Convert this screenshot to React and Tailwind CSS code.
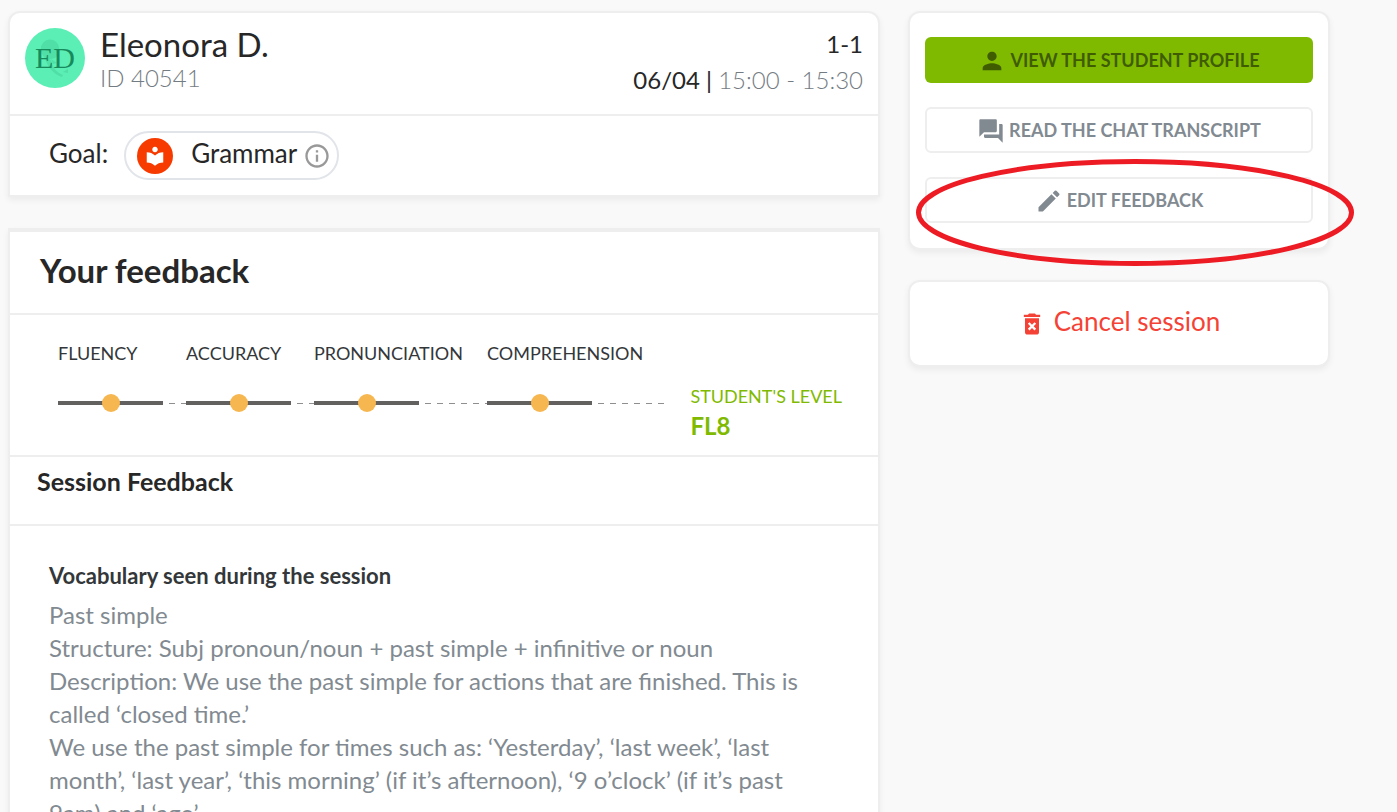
import clsx from 'clsx';
import { MdPerson, MdForum, MdEdit, MdDeleteForever, MdLocalLibrary, MdInfoOutline } from 'react-icons/md';

const skills = [
  { name: 'Fluency', width: 'w-32' },
  { name: 'Accuracy', width: 'w-32' },
  { name: 'Pronunciation', width: 'w-[173px]' },
  { name: 'Comprehension', width: 'w-[178px]' },
];

const vocabulary = [
  'Past simple',
  'Structure: Subj pronoun/noun + past simple + infinitive or noun',
  'Description: We use the past simple for actions that are finished. This is called ‘closed time.’',
  'We use the past simple for times such as: ‘Yesterday’, ‘last week’, ‘last month’, ‘last year’, ‘this morning’ (if it’s afternoon), ‘9 o’clock’ (if it’s past 9am) and ‘ago’.',
];

function Card({ className, children }) {
  return (
    <section className={clsx('bg-white border-2 border-[#eeeeee] shadow-[0_3px_6px_rgba(0,0,0,0.06)]', className)}>
      {children}
    </section>
  );
}

function Avatar() {
  return (
    <div className="relative w-15 h-15 rounded-full overflow-hidden bg-[#5befb5] flex items-center justify-center shrink-0">
      <svg viewBox="0 0 60 60" className="absolute inset-0 w-full h-full" aria-hidden="true">
        <g fill="#4fdfa7">
          <path d="M16 21a9 9 0 0 1 18-1c0 5-1 8-4 10l-8 2c-4-3-6-7-6-11z" />
          <path d="M20 30c2 8 8 16 17 19l1-2c-7-3-11-8-12-15z" />
          <path d="M26 31l6 4-4 1zM38 44l5-3v4z" />
        </g>
      </svg>
      <span className="relative text-[30px] leading-none text-[#178a5c] font-['Liberation_Serif',serif]">ED</span>
    </div>
  );
}

function ActionButton({ icon: Icon, primary, children }) {
  return (
    <button
      className={clsx(
        'w-full h-[46px] rounded-md flex items-center justify-center gap-1 text-lg font-bold uppercase',
        primary ? 'bg-[#7fba00] text-[#3f5d00]' : 'bg-white border-2 border-[#eeeeee] text-[#828a91]'
      )}
    >
      <Icon className="w-7 h-7 mt-0.5" />
      {children}
    </button>
  );
}

function Skill({ name, width }) {
  return (
    <div className={width}>
      <h4 className="text-lg leading-6 uppercase text-[#33373a]">{name}</h4>
      <div className="mt-7 flex items-center h-5">
        <div className="w-[105px] h-1 bg-[#636060] flex items-center justify-center shrink-0">
          <span className="w-4.5 h-4.5 rounded-full bg-[#f7b750] shrink-0" />
        </div>
        <div className="ml-1.5 flex-1 h-px bg-[repeating-linear-gradient(90deg,#8f8f8f_0_6px,transparent_6px_12px)]" />
      </div>
    </div>
  );
}

export default function App() {
  return (
    <div className="min-h-screen bg-[#f9f9f9] pl-2 pr-[67px] pt-[11px] grid grid-cols-[minmax(0,872fr)_minmax(0,422fr)] gap-7 items-start font-[Lato,sans-serif] text-[#272727]">
      <main className="flex flex-col gap-[31px]">
        <Card className="rounded-t-xl">
          <header className="h-[103px] px-[15px] pt-[15px] flex justify-between border-b-2 border-[#eeeeee]">
            <div className="flex gap-[15px]">
              <Avatar />
              <div>
                <h1 className="text-[33px] leading-8">Eleonora D.</h1>
                <p className="mt-0.5 text-2xl leading-8 font-light text-[#747c83]">ID 40541</p>
              </div>
            </div>
            <div className="-mt-0.5 text-right text-2xl leading-9">
              <p>1-1</p>
              <p>
                06/04 | <span className="font-light text-[#747c83]">15:00 - 15:30</span>
              </p>
            </div>
          </header>
          <div className="h-[79px] px-[39px] flex items-center gap-4 text-[26px]">
            <span className="pb-1">Goal:</span>
            <div className="h-[49px] pl-[11px] pr-1.5 flex items-center border-2 border-[#e1e4e9] rounded-full">
              <span className="w-9 h-9 rounded-full bg-[#f73b00] text-white flex items-center justify-center">
                <MdLocalLibrary className="w-[22px] h-[22px]" />
              </span>
              <span className="ml-4.5 mr-1.5 pb-1">Grammar</span>
              <MdInfoOutline className="w-7 h-7 text-[#999999]" />
            </div>
          </div>
        </Card>

        <Card className="border-t-4">
          <h2 className="h-[83px] px-7.5 pb-1 flex items-center text-[33px] font-bold border-b-2 border-[#eeeeee]">
            Your feedback
          </h2>
          <div className="h-[142px] pl-12 pr-9 pt-[26px] flex justify-between border-b-2 border-[#eeeeee]">
            <div className="flex">
              {skills.map((skill) => (
                <Skill key={skill.name} {...skill} />
              ))}
            </div>
            <div className="pt-[43px] text-[#7fba00]">
              <p className="text-lg leading-6 uppercase">Student's level</p>
              <p className="text-2xl leading-9 font-bold">FL8</p>
            </div>
          </div>
          <h3 className="h-[69px] px-[27px] pt-2 text-[25px] leading-8 font-bold border-b-2 border-[#eeeeee]">
            Session Feedback
          </h3>
          <div className="pl-[39px] pr-[75px] pt-[34px] pb-10">
            <h4 className="text-[22px] leading-8 font-bold text-[#33373a]">Vocabulary seen during the session</h4>
            <div className="mt-1.5 text-2xl leading-[33px] text-[#828a91]">
              {vocabulary.map((line) => (
                <p key={line}>{line}</p>
              ))}
            </div>
          </div>
        </Card>
      </main>

      <aside className="flex flex-col gap-[30px]">
        <Card className="rounded-xl px-[15px] pt-6 pb-[25px] flex flex-col gap-6">
          <ActionButton icon={MdPerson} primary>View the student profile</ActionButton>
          <ActionButton icon={MdForum}>Read the chat transcript</ActionButton>
          <div className="relative">
            <ActionButton icon={MdEdit}>Edit feedback</ActionButton>
            {/* red marker around the edit button */}
            <svg
              viewBox="0 0 438 107"
              preserveAspectRatio="none"
              className="absolute -left-[9px] -top-[18px] w-[calc(100%+50px)] h-[107px] pointer-events-none"
              aria-hidden="true"
            >
              <ellipse cx="219" cy="53.5" rx="216.5" ry="51" fill="none" stroke="#ed1c24" strokeWidth="5" />
            </svg>
          </div>
        </Card>
        <Card className="rounded-xl h-[87px] flex items-center justify-center">
          <button className="flex items-center gap-2 pb-1 text-[26px] text-[#f44336]">
            <MdDeleteForever className="w-7 h-7 mt-1" />
            Cancel session
          </button>
        </Card>
      </aside>
    </div>
  );
}
